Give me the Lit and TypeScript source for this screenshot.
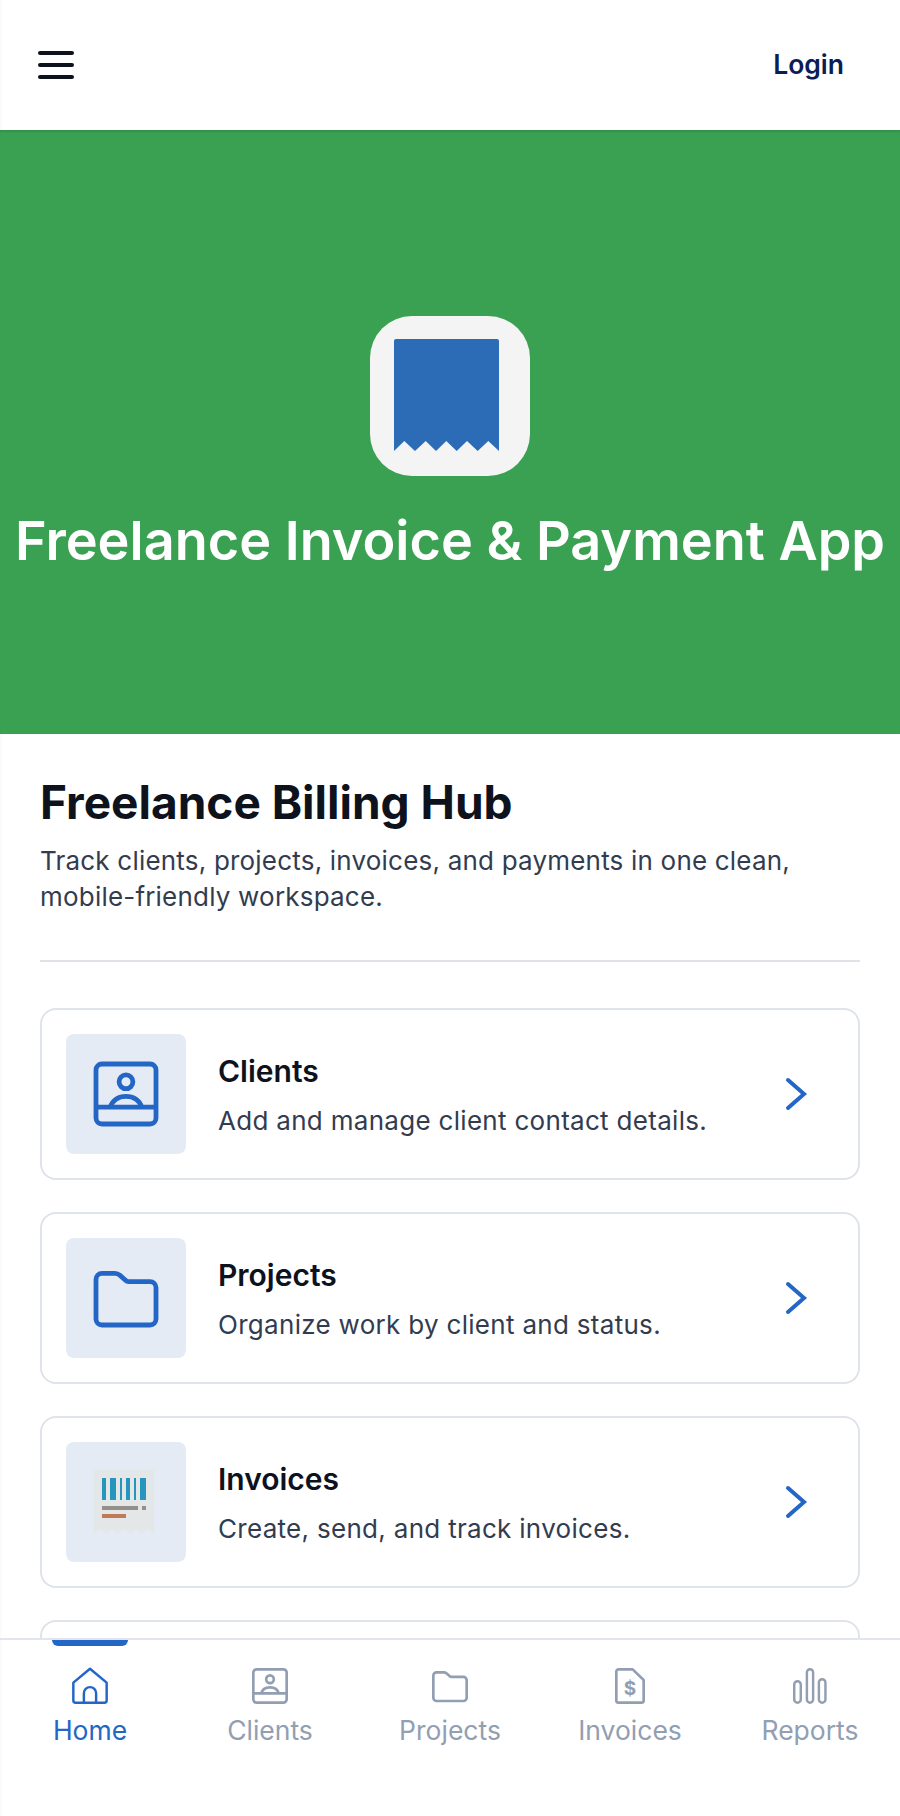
import { LitElement, html, css, svg } from "lit";
import { customElement } from "lit/decorators.js";

const clientIcon = svg`<rect x="3" y="3" width="30" height="30" rx="3" fill="none" stroke="currentColor" stroke-width="2.400"/><path d="M3 24.600H33" fill="none" stroke="currentColor" stroke-width="2.400"/><circle cx="18" cy="11.900" r="3.450" fill="none" stroke="currentColor" stroke-width="2.400"/><path d="M10.200 24.600c.8-3.400 4-5.400 7.800-5.400s7 2 7.800 5.400" fill="none" stroke="currentColor" stroke-width="2.400"/>`;
const folderIcon = svg`<path d="M6 5.700H12.500C13.500 5.700 14.300 6.100 15 6.700L17.600 9C18.100 9.500 18.700 9.800 19.400 9.800H30C31.700 9.800 33 11.100 33 12.800V28.500C33 30.200 31.700 31.500 30 31.500H6C4.300 31.500 3 30.200 3 28.500V8.700C3 7 4.300 5.700 6 5.700Z" fill="none" stroke="currentColor" stroke-width="2.400"/>`;
const homeIcon = svg`<path d="M18 2.500 33 15V31c0 1.100-.9 2-2 2H5c-1.100 0-2-.9-2-2V15L18 2.500z" fill="none" stroke="currentColor" stroke-width="2.200" stroke-linejoin="round"/><path d="M12.500 33V24.500a5.500 5.500 0 0 1 11 0V33" fill="none" stroke="currentColor" stroke-width="2.200"/>`;
const invoiceNavIcon = svg`<path d="M7.700 3H20.400L30.300 12.600V31a2 2 0 0 1-2 2H7.700a2 2 0 0 1-2-2V5a2 2 0 0 1 2-2z" fill="none" stroke="currentColor" stroke-width="2.400" stroke-linejoin="round"/>`;
const reportIcon = svg`<rect x="3.800" y="13.700" width="5.900" height="19.300" rx="2.950" fill="none" stroke="currentColor" stroke-width="2.200"/><rect x="15.200" y="2.900" width="5.600" height="30.100" rx="2.800" fill="none" stroke="currentColor" stroke-width="2.200"/><rect x="26" y="11.900" width="5.900" height="21.100" rx="2.950" fill="none" stroke="currentColor" stroke-width="2.200"/>`;

const cards = [
  { title: "Clients", text: "Add and manage client contact details.", icon: "clients" },
  { title: "Projects", text: "Organize work by client and status.", icon: "projects" },
  { title: "Invoices", text: "Create, send, and track invoices.", icon: "invoices" },
];
const tabs = [
  { label: "Home", icon: homeIcon, active: true },
  { label: "Clients", icon: clientIcon },
  { label: "Projects", icon: folderIcon },
  { label: "Invoices", icon: invoiceNavIcon, dollar: true },
  { label: "Reports", icon: reportIcon },
];

@customElement("app-root")
export class AppRoot extends LitElement {
  static styles = css`
    :host { display: block; height: 1816px; overflow: hidden; background: #fff; font-family: "Inter", "Noto Sans", sans-serif; position: relative; }
    .page { display: flex; flex-direction: column; height: 1816px; }
    .scroll { flex: 1; min-height: 0; overflow: hidden; }
    header { height: 130px; display: flex; align-items: center; justify-content: space-between; padding: 0 56px 0 38px; box-sizing: border-box; background: #fff; box-shadow: inset 3px 0 3px -2px rgba(0,0,0,.03); }
    .burger { display: flex; flex-direction: column; gap: 7.500px; width: 36px; }
    .burger i { display: block; height: 4.500px; border-radius: 3px; background: #0d121c; }
    .login { font-size: 26.500px; font-weight: 600; color: #0b1c56; margin-top: -2px; }
    .hero { height: 604px; box-sizing: border-box; background: #3aa152; display: flex; flex-direction: column; align-items: center; justify-content: center; gap: 30px; box-shadow: inset 0 3px 2px -1px rgba(0,0,0,.1); padding-top: 28px; }
    .logo { width: 160px; height: 160px; border-radius: 42px; background: #f4f4f4; }
    .logo svg { display: block; }
    .hero h1 { margin: 0; color: #fff; font-size: 54px; font-weight: 600; white-space: nowrap; line-height: 70px; }
    .content { padding: 40px 40px 0; box-shadow: inset 3px 0 3px -2px rgba(0,0,0,.03); }
    h2 { margin: 0; font-size: 46px; line-height: 56px; font-weight: 700; color: #0d121c; }
    .lead { margin: 13px 0 0; font-size: 26px; letter-spacing: .2px; line-height: 36px; color: #333c4f; }
    hr { border: 0; height: 2px; background: #dfe3e8; margin: 45px 0 46px; }
    .list { display: flex; flex-direction: column; gap: 32px; }
    .card { height: 172px; box-sizing: border-box; border: 2px solid #dfe3ea; border-radius: 16px; display: flex; align-items: center; padding: 0 50px 0 24px; background: #fff; }
    .thumb { width: 120px; height: 120px; flex: none; border-radius: 8px; background: #e5ebf5; display: flex; align-items: center; justify-content: center; color: #2366c6; margin-right: 32px; }
    .thumb svg { width: 72px; height: 72px; }
    .text { flex: 1; min-width: 0; display: flex; flex-direction: column; gap: 15px; margin-top: 2px; }
    .text b { font-size: 30px; line-height: 36px; font-weight: 600; color: #0d121c; }
    .text span { font-size: 26px; letter-spacing: .3px; line-height: 34px; color: #333c4f; }
    .chev { width: 24px; height: 36px; color: #2366c6; flex: none; }
    nav { height: 178px; flex: none; position: relative; z-index: 1; background: #fff; border-top: 2px solid #e2e5ef; box-sizing: border-box; display: grid; grid-template-columns: repeat(5, 1fr); box-shadow: inset 3px 0 3px -2px rgba(0,0,0,.03); }
    .tab { display: flex; flex-direction: column; align-items: center; padding-top: 26px; color: #929eb1; font-size: 26.500px; line-height: 34px; position: relative; gap: 7px; }
    .tab svg { display: block; width: 40px; height: 40px; }
    .tab.active { color: #2366c6; }
    .tab.active::before { content: ""; position: absolute; top: 0; left: 52px; width: 76px; height: 6px; background: #2366c6; border-radius: 0 0 6px 6px; }
    .ico { position: relative; width: 40px; height: 40px; }
    .dollar { position: absolute; inset: 8px 0 0; text-align: center; font-size: 19px; line-height: 30px; font-weight: 700; }
  `;

  private thumb(kind: string) {
    if (kind === "clients") return html`<svg viewBox="0 0 36 36">${clientIcon}</svg>`;
    if (kind === "projects") return html`<svg viewBox="0 0 36 36">${folderIcon}</svg>`;
    return html`<svg viewBox="0 0 72 72">
      <path d="M4 4H64V68L58 63 52 68 46 63 40 68 34 63 28 68 22 63 16 68 10 63 4 68Z" fill="#e4e7e8"/>
      <g fill="#2696bd"><rect x="12" y="12" width="4" height="22"/><rect x="20" y="12" width="6" height="22"/><rect x="30" y="12" width="2" height="22"/><rect x="36" y="12" width="4" height="22"/><rect x="44" y="12" width="2" height="22"/><rect x="50" y="12" width="6" height="22"/></g>
      <rect x="12" y="40" width="36" height="4" fill="#958f89"/><rect x="52" y="40" width="4" height="4" fill="#958f89"/>
      <rect x="12" y="48" width="24" height="4" fill="#c17a55"/>
    </svg>`;
  }

  render() {
    return html`<div class="page">
      <div class="scroll">
        <header>
          <div class="burger"><i></i><i></i><i></i></div>
          <div class="login">Login</div>
        </header>
        <section class="hero">
          <div class="logo">
            <svg width="160" height="160" viewBox="0 0 160 160">
              <path d="M26 23H127a2 2 0 0 1 2 2V135L118.300 125 107.700 135 97 125 86.700 135 76.300 125 66 135 55.700 125 45 135 34.300 125 24 135V25a2 2 0 0 1 2-2z" fill="#2c6bb5"/>
            </svg>
          </div>
          <h1>Freelance Invoice &amp; Payment App</h1>
        </section>
        <section class="content">
          <h2>Freelance Billing Hub</h2>
          <p class="lead">Track clients, projects, invoices, and payments in one clean, mobile-friendly workspace.</p>
          <hr />
          <div class="list">
            ${cards.map((c) => html`<div class="card">
              <div class="thumb">${this.thumb(c.icon)}</div>
              <div class="text"><b>${c.title}</b><span>${c.text}</span></div>
              <svg class="chev" viewBox="0 0 24 36"><path d="M4 4 20 18 4 32" fill="none" stroke="currentColor" stroke-width="4" stroke-linecap="round"/></svg>
            </div>`)}
            <div class="card"></div>
          </div>
        </section>
      </div>
      <nav>
        ${tabs.map((t) => html`<div class="tab ${t.active ? "active" : ""}">
          <div class="ico"><svg viewBox="0 0 36 36">${t.icon}</svg>${t.dollar ? html`<span class="dollar">$</span>` : ""}</div>
          <span>${t.label}</span>
        </div>`)}
      </nav>
    </div>`;
  }
}
